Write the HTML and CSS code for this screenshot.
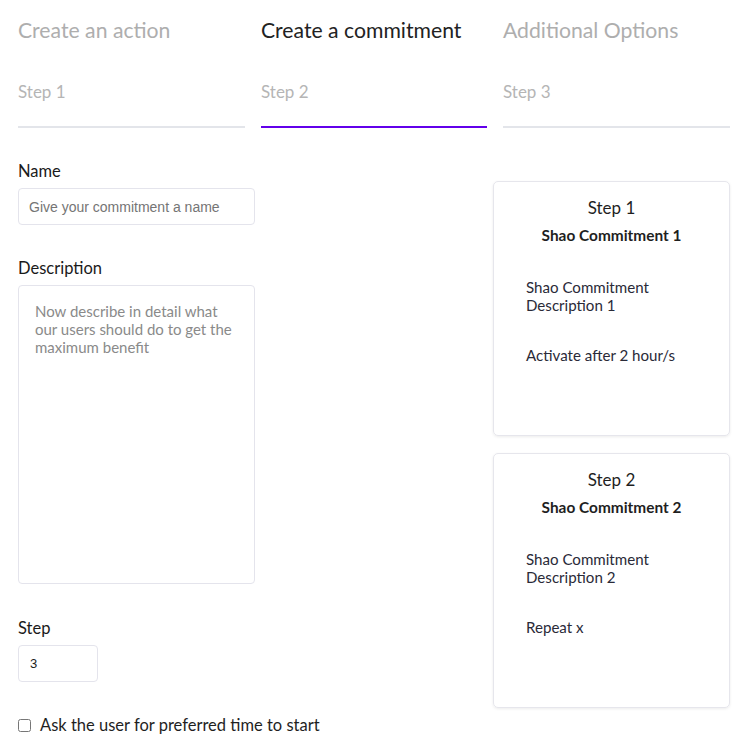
FILE: index.html
```html
<!DOCTYPE html>
<html>
<head>
<meta charset="utf-8">
<link rel="stylesheet" href="styles.css">
</head>
<body>
<div class="page">
  <div class="steps">
    <div class="tab">
      <div class="tab-title">Create an action</div>
      <div class="tab-step">Step 1</div>
    </div>
    <div class="tab active">
      <div class="tab-title">Create a commitment</div>
      <div class="tab-step">Step 2</div>
    </div>
    <div class="tab">
      <div class="tab-title">Additional Options</div>
      <div class="tab-step">Step 3</div>
    </div>
  </div>
  <div class="content">
    <div class="form">
      <label class="label label-first">Name</label>
      <input class="input" type="text" placeholder="Give your commitment a name">
      <label class="label label-gap">Description</label>
      <textarea class="textarea" placeholder="Now describe in detail what our users should do to get the maximum benefit"></textarea>
      <label class="label label-gap2">Step</label>
      <input class="input input-small" type="text" value="3">
      <label class="check"><input type="checkbox" class="checkbox"><span>Ask the user for preferred time to start</span></label>
    </div>
    <div class="cards">
      <div class="card">
        <div class="card-step">Step 1</div>
        <div class="card-name">Shao Commitment 1</div>
        <div class="card-desc">Shao Commitment<br>Description 1</div>
        <div class="card-extra">Activate after 2 hour/s</div>
      </div>
      <div class="card">
        <div class="card-step">Step 2</div>
        <div class="card-name">Shao Commitment 2</div>
        <div class="card-desc">Shao Commitment<br>Description 2</div>
        <div class="card-extra">Repeat x</div>
      </div>
    </div>
  </div>
</div>
</body>
</html>
```
FILE: styles.css
```css
* { box-sizing: border-box; }
html, body { margin: 0; padding: 0; background: #fff; }
body { font-family: Lato, "Noto Sans", sans-serif; color: #1f1f1f; }
.page { padding: 18px 20px 0 18px; width: 750px; }
.steps { display: grid; grid-template-columns: 227px 226px 227px; column-gap: 16px; }
.tab { border-bottom: 2px solid #e3e5ea; height: 110px; }
.tab.active { border-bottom-color: #6200ea; }
.tab-title { font-size: 21.2px; line-height: 24px; color: #aeaeae; }
.tab.active .tab-title { color: #222; }
.tab-step { margin-top: 38px; font-size: 17px; line-height: 24px; color: #b5b5b5; }
.content { display: flex; justify-content: space-between; width: 712px; margin-top: 32px; }
.form { width: 237px; display: flex; flex-direction: column; align-items: flex-start; }
.label { font-size: 16.5px; line-height: 20px; color: #1a1a1a; height: 20px; margin-bottom: 7px; }
.label-first { margin-top: 1px; }
.label-gap { margin-top: 33px; }
.label-gap2 { margin-top: 34px; }
.input { width: 237px; height: 37px; border: 1px solid #e4e4ec; border-radius: 4px; padding: 0 10px; font-family: "Liberation Sans", Arial, sans-serif; font-size: 14px; color: #222; outline: none; }
.input::placeholder { color: #757575; }
.input-small { width: 80px; font-size: 13px; padding: 0 11px; }
.textarea { width: 237px; height: 299px; border: 1px solid #e4e4ec; border-radius: 4px; padding: 16px 16px; font-family: Lato, "Noto Sans", sans-serif; font-size: 15px; line-height: 18px; resize: none; outline: none; }
.textarea::placeholder { color: #8a8a8a; }
.check { display: flex; align-items: center; margin-top: 33px; font-size: 16.5px; line-height: 20px; color: #1f1f1f; white-space: nowrap; }
.checkbox { width: 13px; height: 13px; margin: 0 9px 0 0; }
.cards { width: 237px; display: flex; flex-direction: column; gap: 17px; margin-top: 21px; }
.card { height: 255px; border: 1px solid #e6e6ec; border-radius: 5px; box-shadow: 0 1px 3px rgba(0,0,0,0.08); padding: 17px 32px 0 32px; }
.card-step { text-align: center; font-size: 17px; line-height: 18px; color: #1f1f1f; }
.card-name { text-align: center; font-size: 15.4px; font-weight: bold; line-height: 18px; margin-top: 9px; color: #1f1f1f; }
.card-desc { font-size: 15.1px; line-height: 18px; margin-top: 34px; color: #2a2a38; }
.card-extra { font-size: 15.1px; line-height: 18px; margin-top: 32px; color: #2a2a38; }
```
